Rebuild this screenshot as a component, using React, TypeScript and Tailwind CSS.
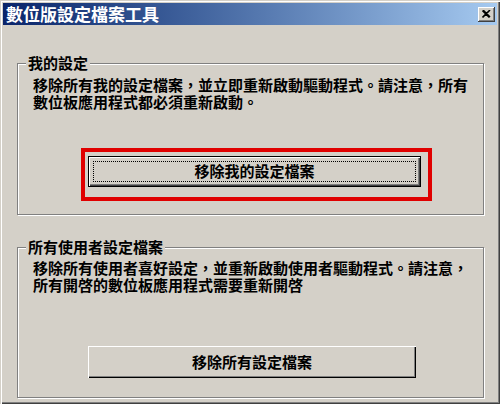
import React from "react";

const font = { fontFamily: '"Noto Sans CJK TC", "Noto Sans CJK HK", sans-serif' };

function GroupBox({ title, children, className }: { title: string; children: React.ReactNode; className?: string }) {
  return (
    <div className={`relative border border-[#808080] shadow-[1px_1px_0_#ffffff,inset_1px_1px_0_#ffffff] ${className ?? ""}`}>
      {/* legend sits over the top line */}
      <span className="absolute left-[8px] -top-[10px] bg-[#d4d0c8] px-[2px] text-[15px] leading-[18px] font-bold text-black">
        {title}
      </span>
      {children}
    </div>
  );
}

function CloseButton() {
  return (
    <div className="w-[17px] h-[15px] bg-[#d4d0c8] flex items-center justify-center shadow-[inset_-1px_-1px_#404040,inset_1px_1px_#ffffff,inset_-2px_-2px_#808080]">
      <svg width="9" height="8" viewBox="0 0 9 8">
        <path d="M1 0 L8 7 M8 0 L1 7 M0.5 0.5 L7.5 7.5 M7.5 0.5 L0.5 7.5" stroke="#000" strokeWidth="1.6" />
      </svg>
    </div>
  );
}

export default function App() {
  return (
    <div
      lang="zh-Hant-TW"
      className="w-[500px] h-[404px] overflow-hidden bg-[#d4d0c8] p-[3px] shadow-[inset_1px_1px_#d4d0c8,inset_2px_2px_#ffffff,inset_-1px_-1px_#404040,inset_-2px_-2px_#808080] [font-feature-settings:'locl']"
      style={font}
    >
      {/* title bar */}
      <div className="h-[22px] flex items-center justify-between bg-gradient-to-r from-[#0a246a] to-[#a6caf0] pl-[3px] pr-[2px]">
        <span className="text-white font-bold text-[17px] leading-[22px]">數位版設定檔案工具</span>
        <CloseButton />
      </div>

      <div className="pl-[14px] pr-[13px]">
        <GroupBox title="我的設定" className="mt-[38px] h-[152px]">
          <p className="pl-[15px] pt-[12px] text-[15px] leading-[17px] font-bold text-black whitespace-nowrap">
            移除所有我的設定檔案，並立即重新啟動驅動程式。請注意，所有
            <br />
            數位板應用程式都必須重新啟動。
          </p>
          <div className="ml-[63px] mt-[38px] w-[351px] h-[53px] border-4 border-[#e00000] pl-[3px] pr-[7px] pt-[4px] pb-[5px]">
            <button className="w-full h-[31px] bg-[#d4d0c8] border border-black p-[4px] shadow-[inset_1px_1px_#ffffff,inset_-1px_-1px_#404040,inset_-2px_-2px_#808080]">
              <div className="w-full h-full border border-dotted border-black flex items-center justify-center text-[15px] font-bold text-black">
                移除我的設定檔案
              </div>
            </button>
          </div>
        </GroupBox>

        <GroupBox title="所有使用者設定檔案" className="mt-[32px] h-[151px]">
          <p className="pl-[15px] pt-[11px] text-[15px] leading-[17px] font-bold text-black whitespace-nowrap">
            移除所有使用者喜好設定，並重新啟動使用者驅動程式。請注意，
            <br />
            所有開啓的數位板應用程式需要重新開啓
          </p>
          <button className="ml-[70px] mt-[53px] w-[328px] h-[32px] bg-[#d4d0c8] flex items-center justify-center text-[15px] font-bold text-black shadow-[inset_1px_1px_#ffffff,inset_-1px_-1px_#000000,inset_-2px_-2px_#808080]">
            移除所有設定檔案
          </button>
        </GroupBox>
      </div>
    </div>
  );
}
